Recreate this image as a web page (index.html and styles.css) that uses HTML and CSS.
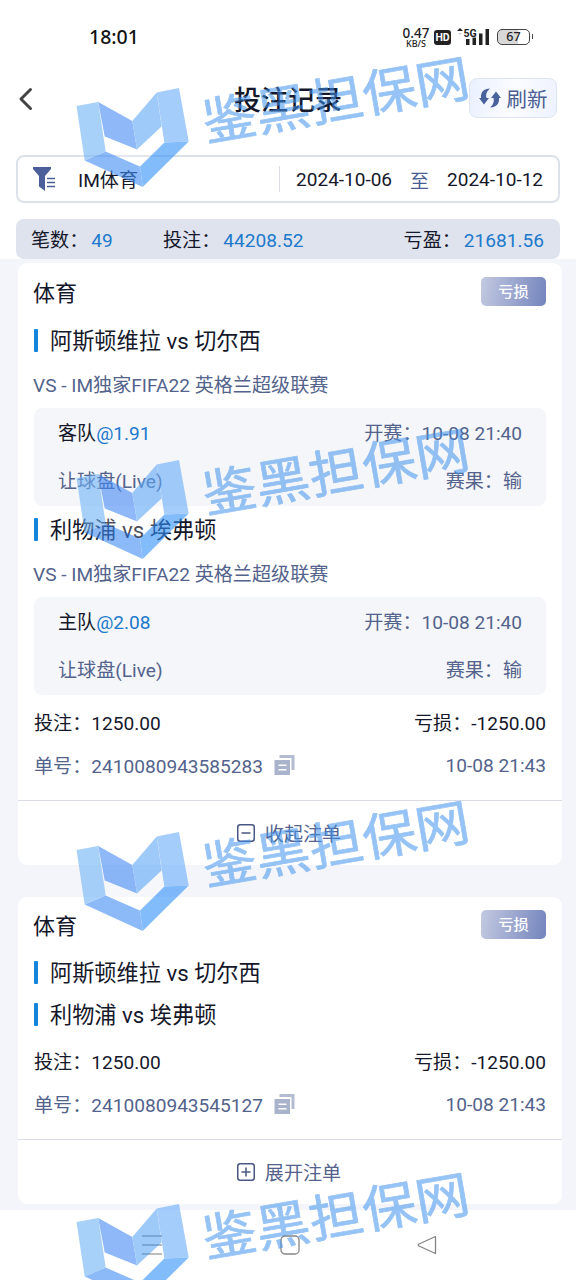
FILE: index.html
```html
<!DOCTYPE html>
<html lang="zh-CN">
<head>
<meta charset="utf-8">
<title>投注记录</title>
<link rel="stylesheet" href="styles.css">
</head>
<body>
<svg class="defs" width="0" height="0" aria-hidden="true">
  <symbol id="copy" viewBox="0 0 20 20">
    <path d="M5 0H20V15H17V3H5Z" fill="#b4bcd2"/>
    <path d="M0 5H15.500V20H0ZM4 9.500V11H12V9.500ZM4 14V15.500H12V14Z" fill="#a9b3cc" fill-rule="evenodd"/>
  </symbol>
  <symbol id="mark" viewBox="0 -40 400 150">
    <g opacity=".6">
      <path d="M1.500 23 23.200 19 30.700 68.500 9.700 77.500Z" fill="#70b4f8"/>
      <path d="M23.200 19 57.300 38 62 66.500 29.700 53.500Z" fill="#4489f5"/>
      <path d="M57.300 38 81.700 9.500 86.700 43.500 62 66.500Z" fill="#5fa8f8"/>
      <path d="M81.700 9.500 104 5 113.700 58.500 89.300 59.500Z" fill="#68acfa"/>
      <path d="M9.700 77.500 30.700 68.500 65 83.500 67.700 104Z" fill="#418df5"/>
      <path d="M65 83.500 89.300 59.500 113.700 58.500 67.700 104Z" fill="#3191fa"/>
      <path d="M29.700 53.500 62 66.500 86.700 43.500 89.300 59.500 65 83.500 30.700 68.500Z" fill="#fff" opacity=".4"/>
    </g>
    <text class="mark-text" transform="translate(132 58) rotate(-9.800) scale(1 .94)" x="-1" y="0" textLength="270">鉴黑担保网</text>
  </symbol>
</svg>

<div class="screen">
  <header class="top">
    <div class="status">
      <span class="clock">18:01</span>
      <div class="status-icons">
        <div class="speed"><span class="speed-value">0.47</span><span class="speed-unit">KB/S</span></div>
        <span class="hd">HD</span>
        <svg class="signal" width="33" height="20" viewBox="0 0 33 20">
          <path d="M0 4 3 1 6 4Z" fill="#222"/><path d="M1 6H5L3 8Z" fill="#ccc"/>
          <text x="6.500" y="9.500" class="net">5G</text>
          <path d="M9 12h3.500v6H9ZM15.500 10.500h3.500v7.500H15.500ZM22 6.500h3.500v11.500H22ZM28.500 2H32v16h-3.500Z" fill="#222"/>
        </svg>
        <div class="battery"><span>67</span></div>
      </div>
    </div>
    <div class="title-bar">
      <svg class="back" width="16" height="24" viewBox="0 0 16 24" fill="none" stroke="#444" stroke-width="3" stroke-linecap="round" stroke-linejoin="round"><path d="M12.500 2.500 3 12 12.500 21.500"/></svg>
      <h1 class="title">投注记录</h1>
      <button class="refresh">
        <svg width="22" height="20" viewBox="0 0 22 20" fill="#4a629c">
          <path d="M11 .5C5 .5 1.500 4 2 10H0L5 16.500 10 10H7.500C6.500 6 8 3 11 .5Z"/>
          <path d="M11 19.500C17 19.500 20.500 16 20 10H22L17 3.500 12 10H14.500C15.500 14 14 17 11 19.500Z"/>
        </svg>
        <span>刷新</span>
      </button>
    </div>
    <div class="filter">
      <svg class="funnel" width="24" height="24" viewBox="0 0 24 24">
        <path d="M0 0H18V2L12 9V24L6 19.500V9L0 2Z" fill="#4b5f9b"/>
        <path d="M14 11.500H22M14 15.500H22M14 19.500H22" stroke="#4b5f9b" stroke-width="1.500"/>
      </svg>
      <span class="sport">IM体育</span>
      <div class="dates"><span>2024-10-06</span><span class="to">至</span><span>2024-10-12</span></div>
    </div>
    <div class="summary">
      <div class="count">笔数：<b>49</b></div>
      <div>投注：<b>44208.52</b></div>
      <div class="result">亏盈：<b>21681.56</b></div>
    </div>
  </header>

  <main class="records">
    <article class="card">
      <div class="card-head"><span class="kind">体育</span><span class="badge">亏损</span></div>
      <div class="teams">阿斯顿维拉 vs 切尔西</div>
      <div class="league">VS - IM独家FIFA22 英格兰超级联赛</div>
      <div class="panel">
        <div class="line"><span class="pick">客队<b>@1.91</b></span><span>开赛：10-08 21:40</span></div>
        <div class="line"><span>让球盘(Live)</span><span>赛果：输</span></div>
      </div>
      <div class="teams">利物浦 vs 埃弗顿</div>
      <div class="league">VS - IM独家FIFA22 英格兰超级联赛</div>
      <div class="panel">
        <div class="line"><span class="pick">主队<b>@2.08</b></span><span>开赛：10-08 21:40</span></div>
        <div class="line"><span>让球盘(Live)</span><span>赛果：输</span></div>
      </div>
      <div class="totals">
        <div class="row"><span>投注：1250.00</span><span>亏损：-1250.00</span></div>
        <div class="row muted"><span class="order">单号：2410080943585283<svg width="21" height="20"><use href="#copy"/></svg></span><span>10-08 21:43</span></div>
      </div>
      <div class="toggle">
        <svg width="18" height="18" viewBox="0 0 18 18" fill="none" stroke="#485783" stroke-width="1.500"><rect x=".75" y=".75" width="16.500" height="16.500" rx="2.500"/><path d="M4.500 9H13.500"/></svg>
        <span>收起注单</span>
      </div>
    </article>

    <article class="card compact">
      <div class="card-head"><span class="kind">体育</span><span class="badge">亏损</span></div>
      <div class="teams">阿斯顿维拉 vs 切尔西</div>
      <div class="teams">利物浦 vs 埃弗顿</div>
      <div class="totals">
        <div class="row"><span>投注：1250.00</span><span>亏损：-1250.00</span></div>
        <div class="row muted"><span class="order">单号：2410080943545127<svg width="21" height="20"><use href="#copy"/></svg></span><span>10-08 21:43</span></div>
      </div>
      <div class="toggle">
        <svg width="18" height="18" viewBox="0 0 18 18" fill="none" stroke="#485783" stroke-width="1.500"><rect x=".75" y=".75" width="16.500" height="16.500" rx="2.500"/><path d="M4.500 9H13.500M9 4.500V13.500"/></svg>
        <span>展开注单</span>
      </div>
    </article>
  </main>

  <nav class="nav">
    <svg width="20" height="20" viewBox="0 0 20 20" stroke="#8a8a8a" stroke-width="1.300"><path d="M0 1H20M0 10H20M0 19H20"/></svg>
    <svg width="20" height="20" viewBox="0 0 20 20" fill="none" stroke="#858585" stroke-width="1.300"><rect x="1" y="1" width="18" height="18" rx="4"/></svg>
    <svg width="20" height="20" viewBox="0 0 20 20" fill="none" stroke="#858585" stroke-width="1.300" stroke-linejoin="round"><path d="M18.500 1.500V18.500L2 11Q.5 10 2 9Z"/></svg>
  </nav>

  <div class="watermarks" aria-hidden="true">
    <svg width="400" height="150"><use href="#mark"/></svg>
    <svg width="400" height="150"><use href="#mark"/></svg>
    <svg width="400" height="150"><use href="#mark"/></svg>
    <svg width="400" height="150"><use href="#mark"/></svg>
  </div>
</div>
</body>
</html>
```
FILE: styles.css
```css
* { box-sizing: border-box; }

body {
  margin: 0;
  font-family: Roboto, "Noto Sans CJK SC", sans-serif;
  font-size: 19.100px;
  color: #15172a;
  background: #fff;
}

b { font-weight: 400; color: #2079cb; }
svg { flex: none; }
.defs { position: absolute; }

.screen {
  position: relative;
  width: 576px;
  height: 1280px;
  overflow: hidden;
  display: flex;
  flex-direction: column;
  background: #f3f5fa;
}

/* Header */
.top { height: 259px; padding: 0 16px; background: #fff; }

.status {
  height: 74px;
  padding: 0 30px 0 73px;
  display: flex;
  align-items: center;
  justify-content: space-between;
}
.clock { font: 500 19.5px/24px "Noto Sans", sans-serif; color: #111; }
.status-icons { display: flex; align-items: center; color: #222; }
.speed {
  width: 28px;
  display: flex;
  flex-direction: column;
  align-items: center;
  font-family: "Noto Sans", sans-serif;
  font-weight: 500;
}
.speed-value { font-size: 13.500px; line-height: 12px; }
.speed-unit { font-size: 9px; line-height: 9px; }
.hd {
  width: 17px;
  height: 15px;
  margin-left: 4px;
  border-radius: 3px;
  background: #222;
  color: #fff;
  font: 700 10.500px/15px Roboto, sans-serif;
  text-align: center;
}
.signal { margin-left: 6px; }
.net { font: 700 10.500px Roboto, sans-serif; fill: #222; }
.battery {
  position: relative;
  width: 33px;
  height: 16px;
  margin-left: 7px;
  border: 1.5px solid #444;
  border-radius: 5px;
  background: linear-gradient(90deg, #d8d8d8 66%, #fff 66%);
  font: 500 12.500px/14px "Noto Sans", sans-serif;
  text-align: center;
}
.battery::after {
  content: "";
  position: absolute;
  right: -4px;
  top: 4px;
  width: 1.500px;
  height: 5px;
  background: #444;
}

.title-bar {
  height: 49px;
  margin-right: -13px;
  display: grid;
  grid-template-columns: 103px 1fr 103px;
  align-items: center;
}
.back { margin-left: 2px; }
.title { margin: 5px 13px 0 0; font-size: 27px; line-height: 40px; font-weight: 500; text-align: center; }
.refresh {
  width: 88px;
  height: 40px;
  margin: -1px 0 0 -1px;
  padding: 0;
  display: flex;
  align-items: center;
  justify-content: center;
  gap: 6px;
  border: 1.5px solid #dfe4f3;
  border-radius: 8px;
  background: linear-gradient(100deg, #eaf0ff, #fbfcff 50%, #eef2ff);
  font: 400 20.500px/28px "Noto Sans CJK SC", sans-serif;
  color: #4a5d92;
}

.filter {
  height: 48px;
  margin-top: 32px;
  padding: 0 15px;
  display: flex;
  align-items: center;
  border: 2px solid #dde1ea;
  border-radius: 8px;
}
.funnel { flex: none; }
.sport { margin-left: 21px; flex: 1; }
.dates {
  height: 26px;
  padding-left: 16px;
  display: flex;
  align-items: center;
  gap: 18px;
  border-left: 1px solid #d9dce4;
  font-size: 19px;
}
.to { color: #4a5d92; }

.summary {
  height: 40px;
  margin-top: 16px;
  padding: 0 16px 0 15px;
  display: flex;
  align-items: center;
  border-radius: 8px;
  background: #dfe3ee;
}
.summary b { margin-left: 3px; }
.count { width: 132px; }
.result { margin-left: auto; }

/* Bet cards */
.records { height: 951px; padding: 4px 14px 0 18px; display: flex; flex-direction: column; gap: 32px; }
.card { border-radius: 9px; background: #fff; }
.card-head {
  height: 57px;
  padding: 0 16px 0 15px;
  display: flex;
  align-items: center;
  justify-content: space-between;
  font-size: 22px;
}
.kind { padding-bottom: 2px; }
.compact .card-head { height: 55px; }
.badge {
  width: 65px;
  height: 29px;
  border-radius: 5px;
  background: linear-gradient(100deg, #c3c9e1, #7485bd);
  color: #fff;
  font-size: 15.200px;
  font-weight: 500;
  line-height: 30px;
  text-align: center;
}
.teams { height: 42px; padding: 0 0 4px 15px; display: flex; align-items: center; font-size: 22.2px; white-space: pre; }
.teams::before { content: ""; width: 4px; height: 23px; margin: 3px 12px 0 1px; border-radius: 1px; background: #1585dc; }
.league { height: 46px; padding-left: 15px; line-height: 47px; color: #53638c; }
.panel {
  height: 98px;
  margin: 0 16px;
  padding: 0 24px;
  border-radius: 8px;
  background: #f4f6f9;
  color: #53638c;
}
.panel + .teams { margin-top: 3px; }
.line { height: 48px; display: flex; align-items: center; justify-content: space-between; }
.pick { color: #15172a; }
.totals { padding: 6px 16px 13px; border-bottom: 1px solid #d9dce5; }
.compact .totals { padding: 4px 16px 13px; }
.row { height: 43px; padding-bottom: 1px; display: flex; align-items: center; justify-content: space-between; }
.muted { color: #53638c; }
.order { display: flex; align-items: center; gap: 11px; }
.toggle { height: 64px; padding-right: 2px; display: flex; align-items: center; justify-content: center; gap: 10px; color: #53638c; }

/* System navigation */
.nav { height: 70px; padding: 0 139px 0 142px; display: flex; align-items: center; justify-content: space-between; background: #fff; }

/* Repeated overlay */
.watermarks { position: absolute; left: 75px; top: 43px; display: flex; flex-direction: column; gap: 222px; pointer-events: none; }
.mark-text {
  font-family: "Noto Sans CJK SC", sans-serif;
  font-size: 54px;
  font-weight: 400;
  fill: #4193ee;
  stroke: #4193ee;
  stroke-width: .8px;
  stroke-linejoin: round;
  opacity: .55;
}
```
